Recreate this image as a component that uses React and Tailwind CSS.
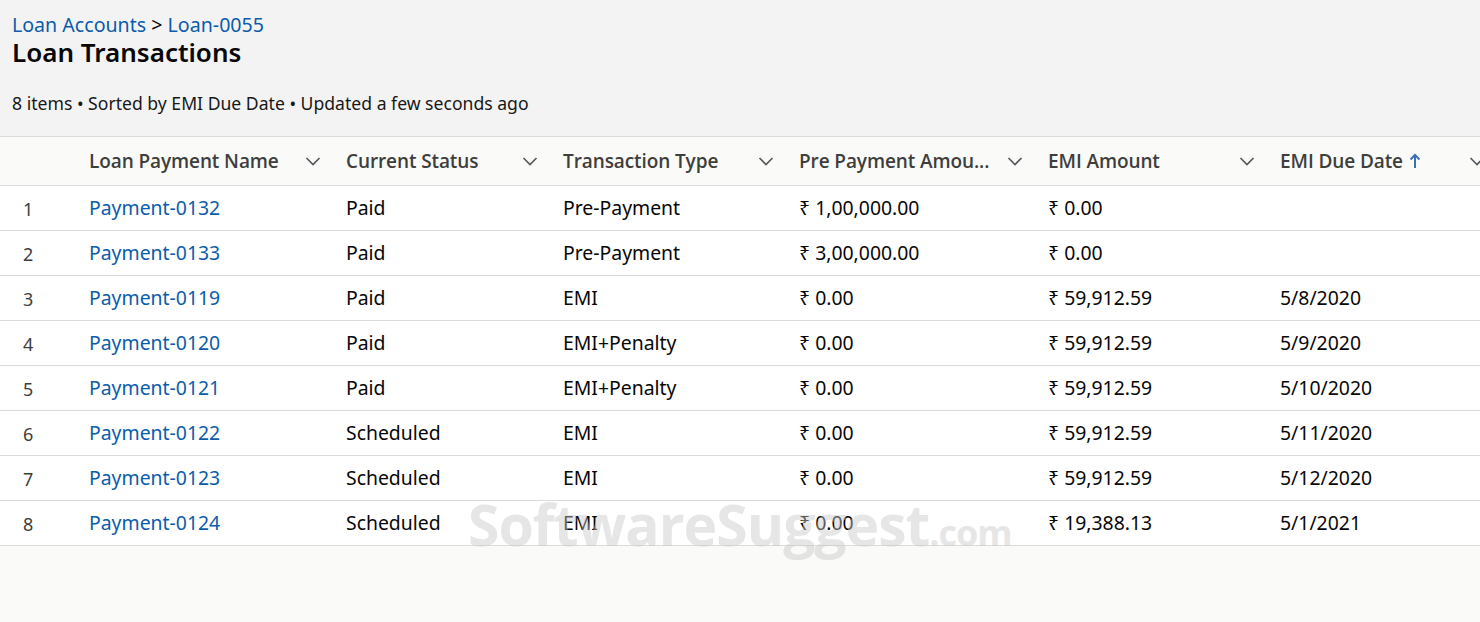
import React from 'react';

const columns = [
  { label: 'Loan Payment Name', w: 'w-[257px]' },
  { label: 'Current Status', w: 'w-[217px]' },
  { label: 'Transaction Type', w: 'w-[236px]' },
  { label: 'Pre Payment Amou...', w: 'w-[249px]' },
  { label: 'EMI Amount', w: 'w-[232px]' },
  { label: 'EMI Due Date', w: 'w-[230px]', sorted: true },
];

const rows = [
  ['Payment-0132', 'Paid', 'Pre-Payment', '₹ 1,00,000.00', '₹ 0.00', ''],
  ['Payment-0133', 'Paid', 'Pre-Payment', '₹ 3,00,000.00', '₹ 0.00', ''],
  ['Payment-0119', 'Paid', 'EMI', '₹ 0.00', '₹ 59,912.59', '5/8/2020'],
  ['Payment-0120', 'Paid', 'EMI+Penalty', '₹ 0.00', '₹ 59,912.59', '5/9/2020'],
  ['Payment-0121', 'Paid', 'EMI+Penalty', '₹ 0.00', '₹ 59,912.59', '5/10/2020'],
  ['Payment-0122', 'Scheduled', 'EMI', '₹ 0.00', '₹ 59,912.59', '5/11/2020'],
  ['Payment-0123', 'Scheduled', 'EMI', '₹ 0.00', '₹ 59,912.59', '5/12/2020'],
  ['Payment-0124', 'Scheduled', 'EMI', '₹ 0.00', '₹ 19,388.13', '5/1/2021'],
];

const Chevron = () => (
  <svg width="18" height="18" viewBox="0 0 18 18" className="shrink-0">
    <path d="M2.5 6 L9 12.5 L15.5 6" fill="none" stroke="#54575a" strokeWidth="1.6" />
  </svg>
);

const App = () => {
  return (
    <div className="relative h-[622px] w-[1480px] overflow-hidden bg-[#fafaf9] font-['Noto_Sans','Liberation_Sans',sans-serif] text-[#080707]">
      {/* Page header */}
      <div className="h-[137px] border-b border-[#dddbda] bg-[#f3f3f3] px-[12px] pt-[12px]">
        <div className="text-[19.6px] leading-[26px] text-[#0b5cab]">
          Loan Accounts <span className="text-[#080707]">&gt;</span> Loan-0055
        </div>
        <div className="text-[26px] font-semibold leading-[28px] text-[#080707]">Loan Transactions</div>
        <div className="mt-[25px] text-[17.6px] leading-[24px] text-[#181818]">
          8 items • Sorted by EMI Due Date • Updated a few seconds ago
        </div>
      </div>

      {/* Table header */}
      <div className="flex h-[49px] items-center border-b border-[#dddbda] bg-[#fafaf9]">
        <div className="w-[75px] shrink-0" />
        {columns.map((c) => (
          <div key={c.label} className={`${c.w} flex shrink-0 items-center justify-between pl-[14px] pr-[10px]`}>
            <span className="flex items-center gap-[6px] font-['Open_Sans',sans-serif] text-[19px] font-semibold tracking-[-0.1px] text-[#3e3e3c]">
              {c.label}
              {c.sorted && (
                <svg width="12" height="16" viewBox="0 0 12 16">
                  <path d="M6 15 V2 M1.5 6.5 L6 2 L10.5 6.5" fill="none" stroke="#3b6fb0" strokeWidth="2" />
                </svg>
              )}
            </span>
            <Chevron />
          </div>
        ))}
      </div>

      {/* Rows */}
      <div className="bg-white">
        {rows.map((r, i) => (
          <div key={r[0]} className="flex h-[45px] items-center border-b border-[#dddbda] text-[19.4px]">
            <div className="w-[75px] shrink-0 pl-[23px] pt-[2px] text-[18px] text-[#3e3e3c]">{i + 1}</div>
            {r.map((cell, j) => (
              <div
                key={j}
                className={`${columns[j].w} shrink-0 pl-[14px] ${j === 0 ? 'text-[#0b5cab]' : 'text-[#080707]'}`}
              >
                {cell}
              </div>
            ))}
          </div>
        ))}
      </div>

      {/* Watermark */}
      <div className="pointer-events-none absolute left-[468px] top-[493px] flex items-baseline font-['Open_Sans',sans-serif] font-bold tracking-[-1px] text-[#c8c8c8] opacity-45">
        <span className="text-[57px] leading-[62px]">SoftwareSuggest</span>
        <span className="text-[36px] leading-[40px]">.com</span>
      </div>
    </div>
  );
};

export default App;
